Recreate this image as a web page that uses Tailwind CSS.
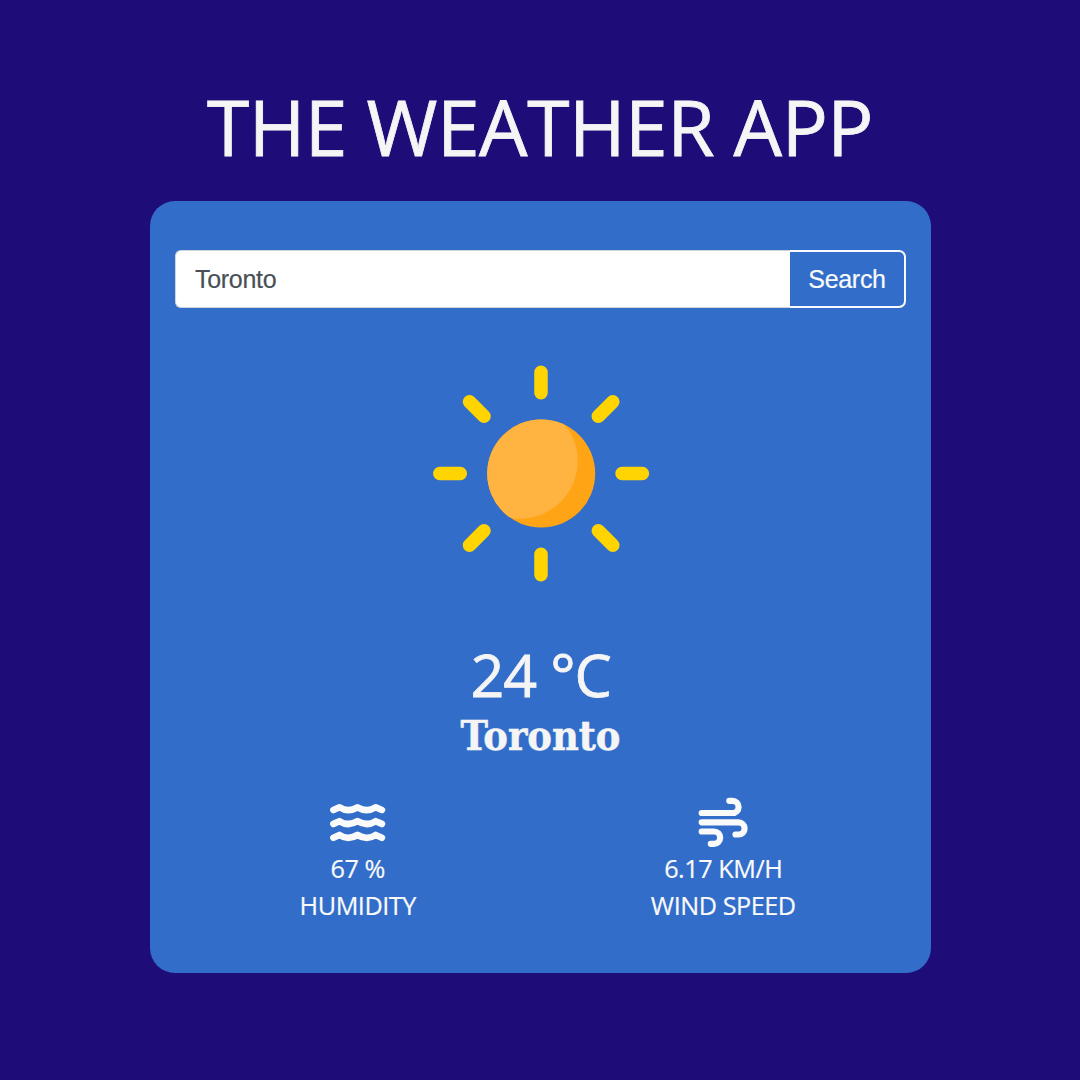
<!DOCTYPE html>
<html lang="en">
<head>
<meta charset="utf-8">
<title>The Weather App</title>
<script src="https://cdn.jsdelivr.net/npm/@tailwindcss/browser@4"></script>
</head>
<body class="flex h-[1080px] w-[1080px] flex-col items-center overflow-hidden bg-[#1e0d78] pt-[74px] font-['Open_Sans',sans-serif] text-[#f5f5f5]">
<h1 class="h-[127px] whitespace-nowrap text-[76.8px] leading-[106px] tracking-[-0.5px] [-webkit-text-stroke:0.8px_#f5f5f5]">THE WEATHER APP</h1>
<main class="ml-px flex h-[772px] w-[781px] flex-col items-center rounded-[25px] bg-[#326ec9] px-[25px] pt-[49px]">
  <form class="flex h-[58px] w-full font-['Liberation_Sans',sans-serif] text-[25px] tracking-[-0.3px]">
    <input type="text" value="Toronto" class="min-w-0 flex-1 rounded-l-[6px] border border-r-0 border-[#ced4da] bg-white pt-px pl-[19px] text-[#495057] outline-none [-webkit-text-stroke:0.2px_#495057]">
    <button type="button" class="w-[116px] rounded-r-[7px] border-2 border-l-0 border-[#f8f9fa] pt-px text-[#f8f9fa] [-webkit-text-stroke:0.2px_#f8f9fa]">Search</button>
  </form>
  <svg class="mt-[57px] ml-px h-[217px] w-[217px] shrink-0" viewBox="433 365 217 217">
    <defs><clipPath id="disc"><circle cx="541.2" cy="473.5" r="54"/></clipPath></defs>
    <circle cx="541.2" cy="473.5" r="54" fill="#ffa415"/>
    <circle cx="520" cy="461" r="57.7" fill="#ffb341" clip-path="url(#disc)"/>
    <path d="M541 372.3V392.7M541 554.3V574.7M439.8 473.5H460.3M622 473.5H642.4M469.5 401.8L484 416.3M612.8 401.8L598.3 416.3M469.5 545.2L484 530.7M612.8 545.2L598.3 530.7" fill="none" stroke="#ffd400" stroke-width="13.5" stroke-linecap="round"/>
  </svg>
  <p class="mt-[52px] h-[75px] text-[59.2px] leading-[80px] tracking-[-1.1px] [-webkit-text-stroke:0.8px_#f5f5f5]">24 °C</p>
  <h2 class="h-[54px] font-['DejaVu_Serif_Condensed','DejaVu_Serif',serif] text-[41px] leading-[54px] font-bold [-webkit-text-stroke:0.5px_#f5f5f5]">Toronto</h2>
  <section class="mt-[30px] grid w-full grid-cols-2 text-center text-[25.2px] leading-[37px] tracking-[-0.45px] text-[#fafafa] [-webkit-text-stroke:0.2px_#fafafa]">
    <div class="flex flex-col items-center">
      <svg class="mb-px h-[56px] w-[57px]" viewBox="329 793 57 56" fill="none" stroke="#fafafa" stroke-width="6.7" stroke-linecap="round" stroke-linejoin="round">
        <path d="M333.4 810L339.5 807.3Q348 812.9 357.5 807.3Q367 812.9 375.7 807.3L381.9 810"/>
        <path d="M333.4 823.9L339.5 821.2Q348 826.8 357.5 821.2Q367 826.8 375.7 821.2L381.9 823.9"/>
        <path d="M333.4 837.7L339.5 835Q348 840.6 357.5 835Q367 840.6 375.7 835L381.9 837.7"/>
      </svg>
      <p>67 %</p>
      <p>HUMIDITY</p>
    </div>
    <div class="flex flex-col items-center">
      <svg class="mb-px h-[56px] w-[52px]" viewBox="697 793 52 56" fill="none" stroke="#fafafa" stroke-width="6.2" stroke-linecap="round" stroke-linejoin="round">
        <path d="M701.7 813H732.5A6.1 6.1 0 0 0 732.5 800.8H729.3"/>
        <path d="M701.7 822.3H738.5A6.1 6.1 0 0 1 738.5 834.5H735.5"/>
        <path d="M701.7 831.5H714A6.1 6.1 0 0 1 714 843.8H710.8"/>
      </svg>
      <p>6.17 KM/H</p>
      <p>WIND SPEED</p>
    </div>
  </section>
</main>
</body>
</html>
